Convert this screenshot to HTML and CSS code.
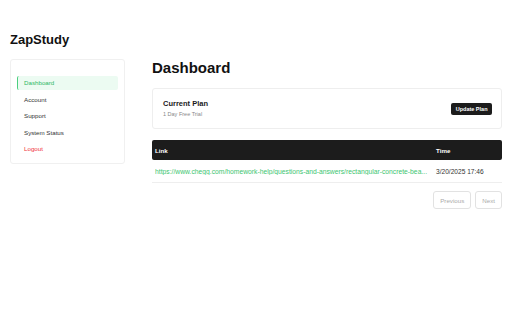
FILE: index.html
```html
<!DOCTYPE html>
<html>
<head>
<meta charset="utf-8">
<link rel="stylesheet" href="styles.css">
</head>
<body>
<div class="page">
  <div class="brand">ZapStudy</div>
  <div class="layout">
    <aside class="sidebar">
      <nav class="nav">
        <a class="nav-item active">Dashboard</a>
        <a class="nav-item">Account</a>
        <a class="nav-item">Support</a>
        <a class="nav-item">System Status</a>
        <a class="nav-item logout">Logout</a>
      </nav>
    </aside>
    <main class="main">
      <h1 class="title">Dashboard</h1>
      <section class="plan-card">
        <div class="plan-info">
          <div class="plan-label">Current Plan</div>
          <div class="plan-name">1 Day Free Trial</div>
        </div>
        <button class="btn-dark">Update Plan</button>
      </section>
      <table class="history">
        <thead>
          <tr><th class="col-link">Link</th><th class="col-time">Time</th></tr>
        </thead>
        <tbody>
          <tr>
            <td class="col-link"><span class="link-text">https://www.chegg.com/homework-help/questions-and-answers/rectangular-concrete-bea...</span></td>
            <td class="col-time">3/20/2025 17:46</td>
          </tr>
        </tbody>
      </table>
      <div class="pager">
        <button class="pg-btn">Previous</button>
        <button class="pg-btn">Next</button>
      </div>
    </main>
  </div>
</div>
</body>
</html>
```
FILE: styles.css
```css
* { box-sizing: border-box; }
html, body { margin: 0; padding: 0; background: #fff; }
body {
  font-family: "Liberation Sans", Arial, sans-serif;
  color: #1a1a1a;
  width: 512px;
  height: 320px;
  overflow: hidden;
}
.page { padding: 31px 10px 0 10px; }
.brand {
  font-size: 13px;
  font-weight: 700;
  line-height: 18px;
  color: #111;
}
.layout {
  display: flex;
  gap: 27px;
  margin-top: 10px;
  align-items: flex-start;
}
.sidebar {
  width: 115px;
  height: 105px;
  border: 1px solid #f0f0f0;
  border-radius: 3px;
  padding: 16px 6px 8px 6px;
}
.nav { display: flex; flex-direction: column; gap: 2.6px; }
.nav-item {
  display: block;
  height: 14px;
  line-height: 14px;
  font-size: 6.2px;
  color: #333;
  padding-left: 6px;
  border-left: 1px solid transparent;
  border-radius: 2px;
}
.nav-item.active {
  background: #ecfbf2;
  border-left-color: #4ccf7f;
  color: #2cb866;
  font-weight: 500;
}
.nav-item.logout { color: #f0323c; font-weight: 500; }
.main { flex: 1; min-width: 0; }
.title {
  margin: 0;
  font-size: 15px;
  line-height: 18px;
  font-weight: 700;
  color: #111;
}
.plan-card {
  margin-top: 11px;
  height: 41px;
  border: 1px solid #eee;
  border-radius: 3px;
  padding: 0 9px 0 10px;
  display: flex;
  align-items: center;
  justify-content: space-between;
}
.plan-info { margin-top: -1px; }
.plan-label { font-size: 7.5px; font-weight: 700; line-height: 10px; color: #1a1a1a; }
.plan-name { font-size: 5.5px; line-height: 8px; color: #888; margin-top: 1px; }
.btn-dark {
  font-family: inherit;
  background: #1c1c1c;
  color: #fff;
  border: none;
  border-radius: 2px;
  font-size: 5.5px;
  font-weight: 700;
  height: 12px;
  padding: 0 4.5px;
  margin-top: 1px;
}
.history {
  margin-top: 11px;
  width: 100%;
  border-collapse: separate;
  border-spacing: 0;
  table-layout: fixed;
}
.history th {
  background: #1c1c1c;
  color: #fff;
  font-size: 6.2px;
  font-weight: 700;
  text-align: left;
  height: 20px;
  padding: 0 3px;
}
.history th.col-link { border-radius: 2px 0 0 2px; }
.history th.col-time { border-radius: 0 2px 2px 0; }
.col-link { width: 281px; }
.history td {
  height: 23px;
  font-size: 6.6px;
  padding: 0 3px;
  border-bottom: 1px solid #eee;
  white-space: nowrap;
  color: #333;
}
.link-text {
  display: block;
  overflow: hidden;
  text-overflow: ellipsis;
  font-size: 6.75px;
  color: #3cc570;
}
.pager {
  display: flex;
  justify-content: flex-end;
  gap: 4px;
  margin-top: 8px;
}
.pg-btn {
  font-family: inherit;
  background: #fff;
  border: 1px solid #e2e2e2;
  border-radius: 3px;
  color: #aaa;
  font-size: 6.2px;
  height: 18px;
  padding: 0 6px;
}
```
